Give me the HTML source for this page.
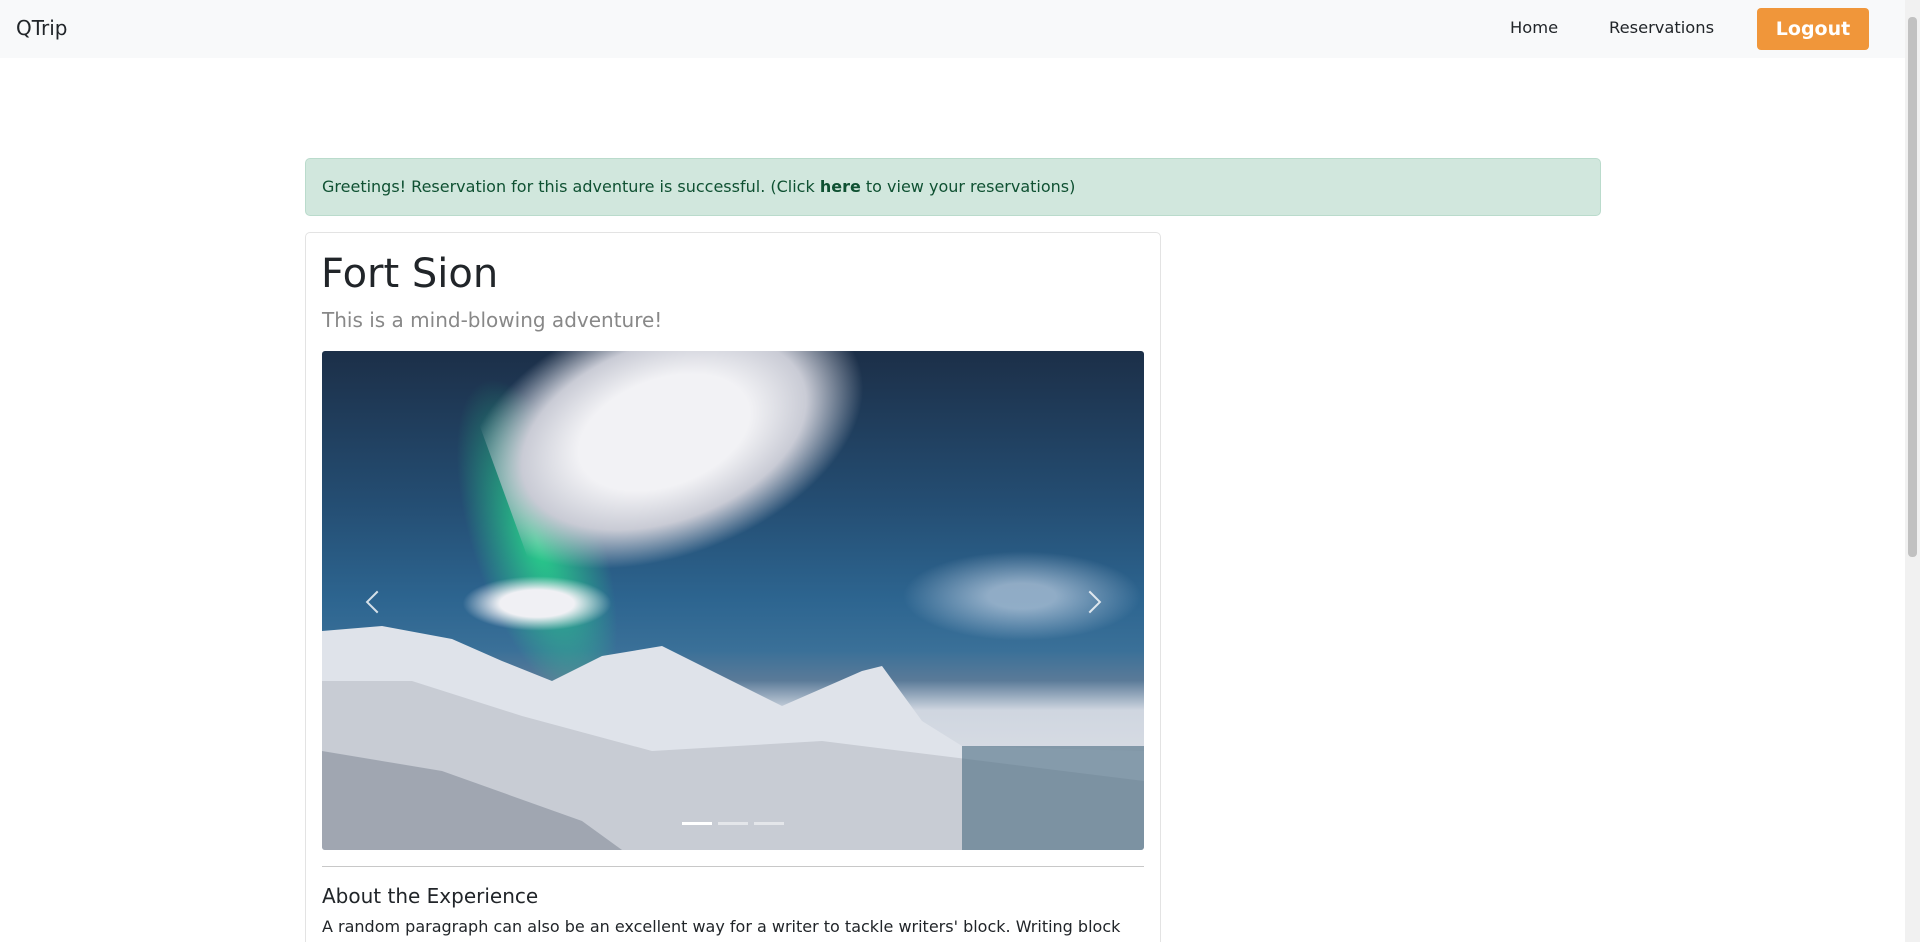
<!DOCTYPE html>
<html style="overflow:hidden;height:942px"><head><style>
*{box-sizing:border-box;margin:0;padding:0}
body{width:1920px;height:942px;overflow:hidden;background:#fff;font-family:"DejaVu Sans","Liberation Sans",sans-serif;color:#212529;position:relative}
.nav{position:absolute;left:0;top:0;width:1905px;height:58px;background:#f8f9fa}
.brand{position:absolute;left:16px;top:16px;font-size:20px}
.nl{position:absolute;top:18px;font-size:16.3px}
.btn{position:absolute;left:1757px;top:8px;width:112px;height:42px;background:#f0963a;border-radius:4px;color:#fff;font-weight:bold;font-size:19px;text-align:center;line-height:42px}
.sb{position:absolute;left:1905px;top:0;width:15px;height:942px;background:#f1f1f1}
.sb div{position:absolute;left:3px;top:17px;width:9px;height:540px;background:#c1c1c1;border-radius:4px}
.alert{position:absolute;left:305px;top:158px;width:1296px;height:58px;background:#d1e7dd;border:1px solid #badbcc;border-radius:5px;color:#0f5132;font-size:16px;padding:18px 16px}
.card{position:absolute;left:305px;top:232px;width:856px;height:720px;border:1px solid #e3e3e3;border-radius:5px}
h1{position:absolute;left:321px;top:251px;font-size:40px;font-weight:normal}
.sub{position:absolute;left:322px;top:308px;font-size:20px;color:#888}
.img{position:absolute;left:322px;top:351px;width:822px;height:499px;overflow:hidden;border-radius:3px;
background:linear-gradient(180deg,#1c2f48 0%,#244d72 30%,#2d6590 50%,#3a7098 60%,#5a7a98 66%,#cfd6e0 72%,#d8dce4 82%,#a9aebb 100%)}
.hr{position:absolute;left:322px;top:866px;width:822px;height:1px;background:#c8c8c8}
h2{position:absolute;left:322px;top:884px;font-size:20px;font-weight:normal}
p{position:absolute;left:322px;top:917px;font-size:16px}
</style></head><body>
<div class="nav"><div class="brand">QTrip</div><div class="nl" style="left:1510px">Home</div><div class="nl" style="left:1609px">Reservations</div><div class="btn">Logout</div></div>
<div class="sb"><div></div></div>
<div class="alert">Greetings! Reservation for this adventure is successful. (Click <b>here</b> to view your reservations)</div>
<div class="card"></div>
<h1>Fort Sion</h1>
<div class="sub">This is a mind-blowing adventure!</div>
<div class="img">
<div style="position:absolute;left:150px;top:20px;width:130px;height:340px;background:radial-gradient(ellipse at center,rgba(40,230,140,.85),rgba(30,160,120,0) 70%);transform:rotate(-18deg)"></div>
<div style="position:absolute;left:170px;top:-50px;width:380px;height:250px;background:radial-gradient(ellipse at 45% 50%,#f2f2f5 30%,#c9cbd5 50%,rgba(160,170,190,0) 70%);transform:rotate(-20deg)"></div>
<div style="position:absolute;left:140px;top:225px;width:150px;height:55px;background:radial-gradient(ellipse at center,#f0f0f4 35%,rgba(200,205,215,0) 70%)"></div>
<div style="position:absolute;left:580px;top:200px;width:240px;height:90px;background:radial-gradient(ellipse at center,rgba(210,220,235,.6) 20%,rgba(150,170,200,0) 70%)"></div>
<svg width="822" height="499" style="position:absolute;left:0;top:0">
<polygon points="0,280 60,275 130,288 180,310 230,330 280,305 340,295 460,355 540,320 560,315 600,370 640,395 822,400 822,499 0,499" fill="#dfe3ea"/>
<polygon points="0,330 90,330 200,365 330,400 500,390 822,430 822,499 0,499" fill="#c8ccd4"/>
<rect x="640" y="395" width="182" height="104" fill="#4a6a80" opacity=".6"/>
<polygon points="0,400 120,420 260,470 300,499 0,499" fill="#8f95a3" opacity=".7"/>
</svg>
<div style="position:absolute;left:47px;top:243px;width:16px;height:16px;border-left:2px solid rgba(255,255,255,.8);border-bottom:2px solid rgba(255,255,255,.8);transform:rotate(45deg)"></div>
<div style="position:absolute;left:760px;top:243px;width:16px;height:16px;border-right:2px solid rgba(255,255,255,.8);border-top:2px solid rgba(255,255,255,.8);transform:rotate(45deg)"></div>
<div style="position:absolute;left:360px;top:471px;width:30px;height:3px;background:#fff"></div>
<div style="position:absolute;left:396px;top:471px;width:30px;height:3px;background:rgba(255,255,255,.5)"></div>
<div style="position:absolute;left:432px;top:471px;width:30px;height:3px;background:rgba(255,255,255,.5)"></div>
</div>
<div class="hr"></div>
<h2>About the Experience</h2>
<p>A random paragraph can also be an excellent way for a writer to tackle writers' block. Writing block</p>
</body></html>
